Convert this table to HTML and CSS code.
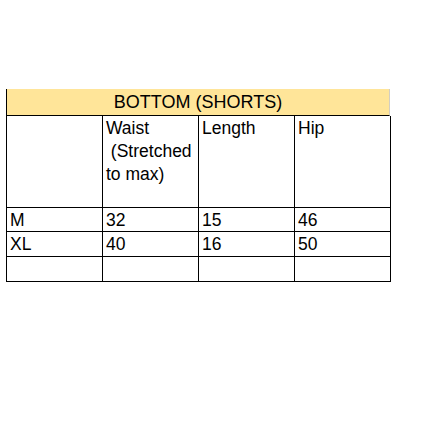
FILE: index.html
```html
<!DOCTYPE html>
<html>
<head>
<meta charset="utf-8">
<link rel="stylesheet" href="styles.css">
</head>
<body>
<div class="sheet">
  <div class="title">BOTTOM (SHORTS)</div>
  <div class="grid">
    <div class="cell top"></div>
    <div class="cell top">Waist<br>&nbsp;(Stretched<br>to max)</div>
    <div class="cell top">Length</div>
    <div class="cell top">Hip</div>

    <div class="cell data">M</div>
    <div class="cell data">32</div>
    <div class="cell data">15</div>
    <div class="cell data">46</div>

    <div class="cell data">XL</div>
    <div class="cell data">40</div>
    <div class="cell data">16</div>
    <div class="cell data">50</div>

    <div class="cell data"></div>
    <div class="cell data"></div>
    <div class="cell data"></div>
    <div class="cell data"></div>
  </div>
</div>
</body>
</html>
```

FILE: styles.css
```css
html, body {
  margin: 0;
  padding: 0;
  background: #ffffff;
}

body {
  font-family: "Liberation Sans", Arial, sans-serif;
  color: #000000;
}

.sheet {
  padding-top: 89px;
  padding-left: 6px;
  width: 385px;
}

.title {
  box-sizing: border-box;
  width: 384px;
  height: 27px;
  background: #ffe599;
  border-left: 1px solid #000000;
  border-right: 1px solid #d2cec2;
  border-bottom: 1px solid #000000;
  text-align: center;
  font-size: 18px;
  line-height: 26px;
}

.grid {
  display: grid;
  grid-template-columns: 96px 96px 96px 96px;
  grid-template-rows: 92px 24px 25px 25px;
  border-left: 1px solid #000000;
  width: 384px;
}

.cell {
  box-sizing: border-box;
  border-right: 1px solid #000000;
  border-bottom: 1px solid #000000;
  font-size: 17.5px;
  padding-left: 3px;
  white-space: nowrap;
  overflow: hidden;
}

.top {
  line-height: 23px;
  padding-top: 1px;
}

.data {
  line-height: 23px;
  padding-top: 1px;
}
```
